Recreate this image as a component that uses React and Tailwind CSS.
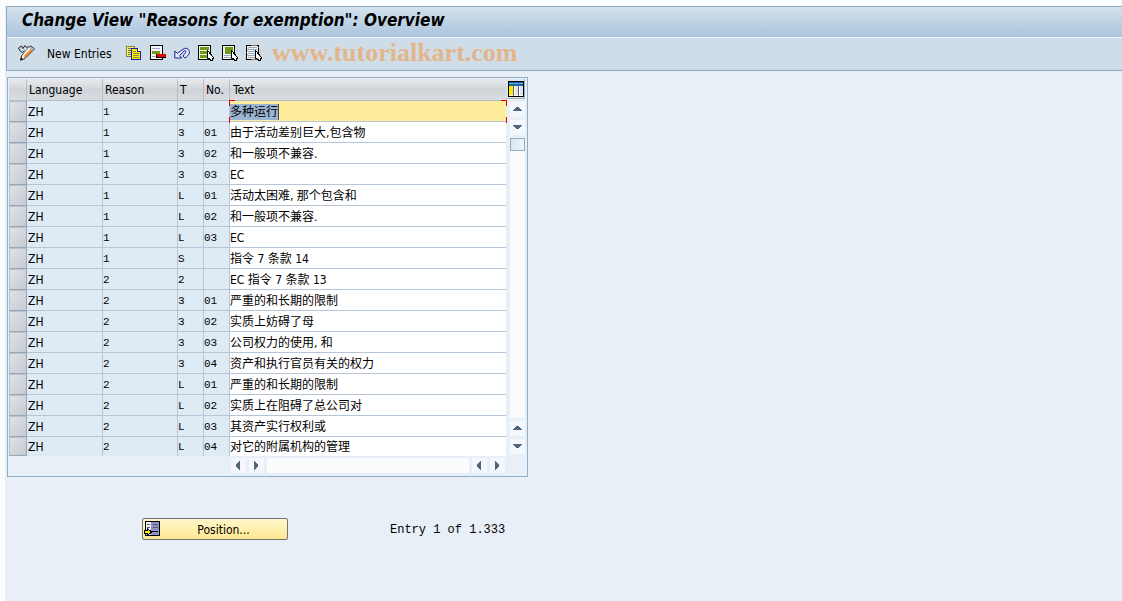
import { clsx } from "clsx";

const rows = [
  ["1", "2", "", "多种运行"],
  ["1", "3", "01", "由于活动差别巨大,包含物"],
  ["1", "3", "02", "和一般项不兼容."],
  ["1", "3", "03", "EC"],
  ["1", "L", "01", "活动太困难, 那个包含和"],
  ["1", "L", "02", "和一般项不兼容."],
  ["1", "L", "03", "EC"],
  ["1", "S", "", "指令 7 条款 14"],
  ["2", "2", "", "EC 指令 7 条款 13"],
  ["2", "3", "01", "严重的和长期的限制"],
  ["2", "3", "02", "实质上妨碍了母"],
  ["2", "3", "03", "公司权力的使用, 和"],
  ["2", "3", "04", "资产和执行官员有关的权力"],
  ["2", "L", "01", "严重的和长期的限制"],
  ["2", "L", "02", "实质上在阻碍了总公司对"],
  ["2", "L", "03", "其资产实行权利或"],
  ["2", "L", "04", "对它的附属机构的管理"],
];

const tools = [
  { label: "Copy as", Icon: CopyIcon },
  { label: "Delete", Icon: DeleteIcon },
  { label: "Undo change", Icon: UndoIcon },
  { label: "Select all", Icon: SelectAllIcon },
  { label: "Select block", Icon: SelectBlockIcon },
  { label: "Deselect all", Icon: DeselectIcon },
];

export default function App() {
  return (
    <div className="min-h-screen bg-[#fafcfe] pt-[6px] pl-[5px] font-['DejaVu_Sans_Condensed','DejaVu_Sans','Noto_Sans_CJK_SC',sans-serif] text-[12px] text-black">
      <div className="min-h-[595px] bg-[#e8eff6]">
        <header className="ml-px border-y border-l border-[#94aac2]">
          <h1 className="h-[31px] border-b border-[#edf4fa] bg-linear-to-b from-[#d3e3ee] to-[#abc3dc] pl-[15px] text-[17px] leading-[27px] font-bold whitespace-nowrap italic">
            Change View "Reasons for exemption": Overview
          </h1>
          <Toolbar />
        </header>

        <main className="pt-[6px] pl-[2px]">
          <TablePanel />
          <div className="mt-[41px] ml-[135px] flex items-center gap-[102px]">
            <button
              type="button"
              className="flex h-[22px] w-[146px] items-center rounded-xs border border-[#6f7478] bg-linear-to-b from-[#fff6cc] to-[#ffe88f] pl-px"
            >
              <PositionIcon />
              <span className="flex-1 pt-px text-center">Position...</span>
            </button>
            <p className="pt-[2px] font-['Liberation_Mono',monospace]">Entry 1 of 1.333</p>
          </div>
        </main>
      </div>
    </div>
  );
}

function Toolbar() {
  return (
    <div className="flex h-8 items-center bg-[#cfdde8] pb-[2px] pl-[11px]">
      <button type="button" aria-label="Display / Change">
        <PencilIcon />
      </button>
      <button type="button" className="ml-[11px] w-[79px] pt-px text-left whitespace-nowrap">
        New Entries
      </button>
      <div className="flex gap-2">
        {tools.map(({ label, Icon }) => (
          <button key={label} type="button" aria-label={label}>
            <Icon />
          </button>
        ))}
      </div>
      <span className="ml-[10px] font-['Liberation_Serif',serif] text-[26px] leading-7 font-bold text-[#e3b58a]">
        www.tutorialkart.com
      </span>
    </div>
  );
}

function TablePanel() {
  return (
    <section className="w-full max-w-[521px] border border-[#8eafca] pt-px pb-[3px] pl-px">
      <div className="flex">
        <table className="flex-1 table-fixed border-separate border-spacing-0">
          <colgroup>
            <col className="w-[18px]" />
            <col className="w-[76px]" />
            <col className="w-[75px]" />
            <col className="w-[26px]" />
            <col className="w-[26px]" />
            <col />
          </colgroup>
          <thead>
            <tr className="h-[22px] bg-linear-to-b from-[#e9eaec] via-[#d0d4d9] to-[#dadde0] text-left">
              <HeadCell />
              <HeadCell>Language</HeadCell>
              <HeadCell>Reason</HeadCell>
              <HeadCell>T</HeadCell>
              <HeadCell>No.</HeadCell>
              <HeadCell last>Text</HeadCell>
            </tr>
          </thead>
          <tbody>
            {rows.map((row, i) => (
              <Row key={i} row={row} index={i} last={i === rows.length - 1} />
            ))}
          </tbody>
        </table>
        <VerticalScroll />
      </div>
      <HorizontalScroll />
    </section>
  );
}

function HeadCell({ children, last }) {
  return (
    <th
      className={clsx(
        "border-b border-[#b4bec9] p-0 pt-px font-normal",
        last ? "pl-[3px]" : "border-r pl-[2px]",
      )}
    >
      {children}
    </th>
  );
}

function Row({ row, index, last }) {
  const [reason, type, no, text] = row;
  const focused = index === 0;
  const cell = clsx(
    "border-r border-[#b6c6d6] p-0 leading-[18px]",
    last ? "" : "border-b pt-px",
  );
  const code = clsx(cell, "font-['Liberation_Mono',monospace] text-[11px]");

  return (
    <tr className={clsx("bg-[#deebf5]", last ? "h-[19px]" : "h-[21px]")}>
      <td className="border-r border-b border-[#98a5b3] p-0">
        <button
          type="button"
          aria-label={`Select row ${index + 1}`}
          className={clsx(
            "block w-full border-t border-l border-[#b9c3cd] bg-linear-to-br from-[#dfe2e6] to-[#c5cbd3]",
            last ? "h-[18px]" : "h-5",
          )}
        />
      </td>
      <td className={clsx(cell, "pl-px")}>ZH</td>
      <td className={code}>{reason}</td>
      <td className={code}>{type}</td>
      <td className={code}>{no}</td>
      <td
        className={clsx(
          "relative border-[#b6c6d6] p-0",
          focused ? "bg-[#ffed9e]" : "bg-white",
          !last && "border-b pt-px",
        )}
      >
        <input
          aria-label={`Text ${index + 1}`}
          defaultValue={text}
          className={clsx(
            "block outline-none",
            focused
              ? "h-4 border-r border-[#5b4a2e] bg-[#9bb4d1] [field-sizing:content]"
              : "h-[18px] w-full",
          )}
        />
        {focused && <FocusCorners />}
      </td>
    </tr>
  );
}

function FocusCorners() {
  return (
    <>
      <i className="absolute -top-px -left-px h-[6px] w-[6px] border-t border-l border-[#e00000]" />
      <i className="absolute -top-px -right-px h-[6px] w-[6px] border-t border-r border-[#e00000]" />
      <i className="absolute -bottom-[2px] -left-px h-[6px] w-[6px] border-b border-l border-[#e00000]" />
      <i className="absolute -right-px -bottom-[2px] h-[6px] w-[6px] border-r border-b border-[#e00000]" />
    </>
  );
}

function VerticalScroll() {
  return (
    <div className="flex w-[21px] flex-col items-end gap-[3px] pr-[2px]">
      <button
        type="button"
        aria-label="Table settings"
        className="flex h-5 w-[19px] items-center justify-end border-r border-b border-[#a5afba] bg-[#dfe4e9]"
      >
        <SettingsIcon />
      </button>
      <Arrow dir="up" label="Line up" />
      <Arrow dir="down" label="Line down" />
      <div className="w-[15px] flex-1 bg-[#fafbfc]">
        <div className="h-[13px] border border-[#9aabba] bg-linear-to-r from-[#dce7f1] to-[#edf3f8]" />
      </div>
      <Arrow dir="up" label="Page up" />
      <div className="pb-[2px]">
        <Arrow dir="down" label="Page down" />
      </div>
    </div>
  );
}

function HorizontalScroll() {
  return (
    <div className="mt-[2px] flex gap-[3px] pr-[22px] pl-[222px]">
      <Arrow dir="left" label="Column left" />
      <Arrow dir="right" label="Column right" />
      <div className="flex-1 bg-[#fafbfc]" />
      <Arrow dir="left" label="Page left" />
      <Arrow dir="right" label="Page right" />
    </div>
  );
}

const arrowPaths = {
  up: "M3 9h9v-1h-1v-1h-1v-1h-1v-1h-3v1h-1v1h-1v1h-1z",
  down: "M3 5h9v1h-1v1h-1v1h-1v1h-3v-1h-1v-1h-1v-1h-1z",
  left: "M9 3v9h-1v-1h-1v-1h-1v-1h-1v-3h1v-1h1v-1h1v-1z",
  right: "M5 3v9h1v-1h1v-1h1v-1h1v-3h-1v-1h-1v-1h-1v-1z",
};

function Arrow({ dir, label }) {
  return (
    <button type="button" aria-label={label} className="block h-[15px] w-[15px] bg-[#f4f8fc]">
      <svg width="15" height="15" viewBox="0 0 15 15">
        <path d={arrowPaths[dir]} fill="#51687a" />
      </svg>
    </button>
  );
}

function Glyph({ children }) {
  return (
    <svg width="16" height="16" viewBox="0 0 16 16" shapeRendering="crispEdges">
      {children}
    </svg>
  );
}

function PencilIcon() {
  return (
    <svg width="18" height="16" viewBox="0 0 18 16">
      <path d="M.5 3l3-2 1.500 2.500 2-3 1.500 2 2-1" fill="none" stroke="#222" />
      <path d="M.5 3l2 3.500 2 1 2-2" fill="none" stroke="#222" />
      <path d="M12.500 .8l4 3-9.500 9.700-4.500 1.700 1.200-4.700z" fill="#fff1d0" stroke="#222" />
      <path d="M6.300 12l8-8.300" stroke="#f0862c" strokeWidth="2" />
      <path d="M5 10.500l6.500-7.500" stroke="#fff6dd" strokeWidth="1.200" />
      <path d="M12.700 1.600l3 2.300-1.500 1.600-3-2.500z" fill="#a9b7e4" />
      <path d="M2.500 15.200l.7-2.700 2 1.700z" fill="#111" />
    </svg>
  );
}

function CopyIcon() {
  return (
    <Glyph>
      <path d="M.5 1.500h8v10h-8z" fill="#fff27a" stroke="#85803a" />
      <path d="M2 3.500h3M2 5.500h3M2 7.500h3M2 9.500h3" stroke="#77733c" />
      <path d="M5.500 3.500h6l3 3v8h-9z" fill="#fff200" stroke="#1b1ba8" />
      <path d="M11.500 3.500v3h3" fill="#fff" stroke="#1b1ba8" />
      <path d="M7 6.500h3M7 8.500h6M7 10.500h6M7 12.500h6" stroke="#8f8d35" />
    </Glyph>
  );
}

function DeleteIcon() {
  return (
    <Glyph>
      <path d="M0 0h13v15H0z" fill="#000" />
      <path d="M1 1h11v13H1z" fill="#f3f5f9" />
      <path d="M2 3.500h8M2 11.500h8" stroke="#a4abca" />
      <path d="M2 6h8v3H2z" fill="#739b19" />
      <path d="M6 9h10v4H6z" fill="#000" />
      <path d="M7 9h9v3H7z" fill="#f00000" />
    </Glyph>
  );
}

function UndoIcon() {
  return (
    <svg width="16" height="16" viewBox="0 0 16 16">
      <path
        d="M.8 6v7h7l-2.300-2.300L10 6c1.200-1 2.500 0 1.700 1.500L9 11l2.200 2.300 3.600-4c2.300-3.800-2.200-8-5.800-5L3.200 8.400z"
        fill="#e5eefb"
        stroke="#1d1d96"
      />
    </svg>
  );
}

function Cursor() {
  return <path d="M9.500 5.500v8h2l1 2h2v-2h1v-1z" fill="#fff" stroke="#000" />;
}

function SelectAllIcon() {
  return (
    <Glyph>
      <path d="M0 0h13v15H0z" fill="#000" />
      <path d="M1 1h11v13H1z" fill="#f3f6f0" />
      <path d="M2 2h9v3H2zM2 6h8v3H2zM2 10h8v3H2z" fill="#6f9a14" />
      <Cursor />
    </Glyph>
  );
}

function SelectBlockIcon() {
  return (
    <Glyph>
      <path d="M0 0h13v15H0z" fill="#000" />
      <path d="M1 1h11v13H1z" fill="#eef4f8" />
      <path d="M3 2h8v7H3z" fill="#6f9a14" />
      <path d="M2 10.500h7M2 12.500h7" stroke="#93a9bd" />
      <Cursor />
    </Glyph>
  );
}

function DeselectIcon() {
  return (
    <Glyph>
      <path d="M0 0h13v15H0z" fill="#000" />
      <path d="M1 1h11v13H1z" fill="#eef4f8" />
      <path d="M2 2.500h9M2 4.500h9M2 6.500h8M2 8.500h7M2 10.500h7M2 12.500h7" stroke="#93a9bd" />
      <Cursor />
      <circle cx="8" cy="7.500" r="7" fill="none" stroke="#e3b58a" strokeOpacity=".6" />
    </Glyph>
  );
}

function SettingsIcon() {
  return (
    <Glyph>
      <path d="M0 0h16v16H0z" fill="#000" />
      <path d="M1 1h14v14H1z" fill="#fff" />
      <path d="M1 1h14v4H1z" fill="#1767b1" />
      <path d="M1 2.500h14" stroke="#67aee0" />
      <path d="M1 5h4v9H1z" fill="#ffe900" />
      <path d="M5.500 2v13M10.500 2v13" stroke="#5c6370" />
      <path d="M7 5h3v9H7zM12 5h3v9h-3z" fill="#dce2ed" />
    </Glyph>
  );
}

function PositionIcon() {
  return (
    <Glyph>
      <path d="M1 0h15v15H1z" fill="#000" />
      <path d="M2 1h13v13H2z" fill="#f1f3f8" />
      <path d="M7 1h8v13H7z" fill="#8e93c4" />
      <path d="M3 3.500h3M3 6.500h3M9 3.500h5M9 6.500h5" stroke="#555b76" />
      <path d="M8 10.500h6" stroke="#000" />
      <path d="M.5 9.500h3v-2l4 3.500-4 3.500v-2h-3z" fill="#ffe900" stroke="#000" />
    </Glyph>
  );
}
